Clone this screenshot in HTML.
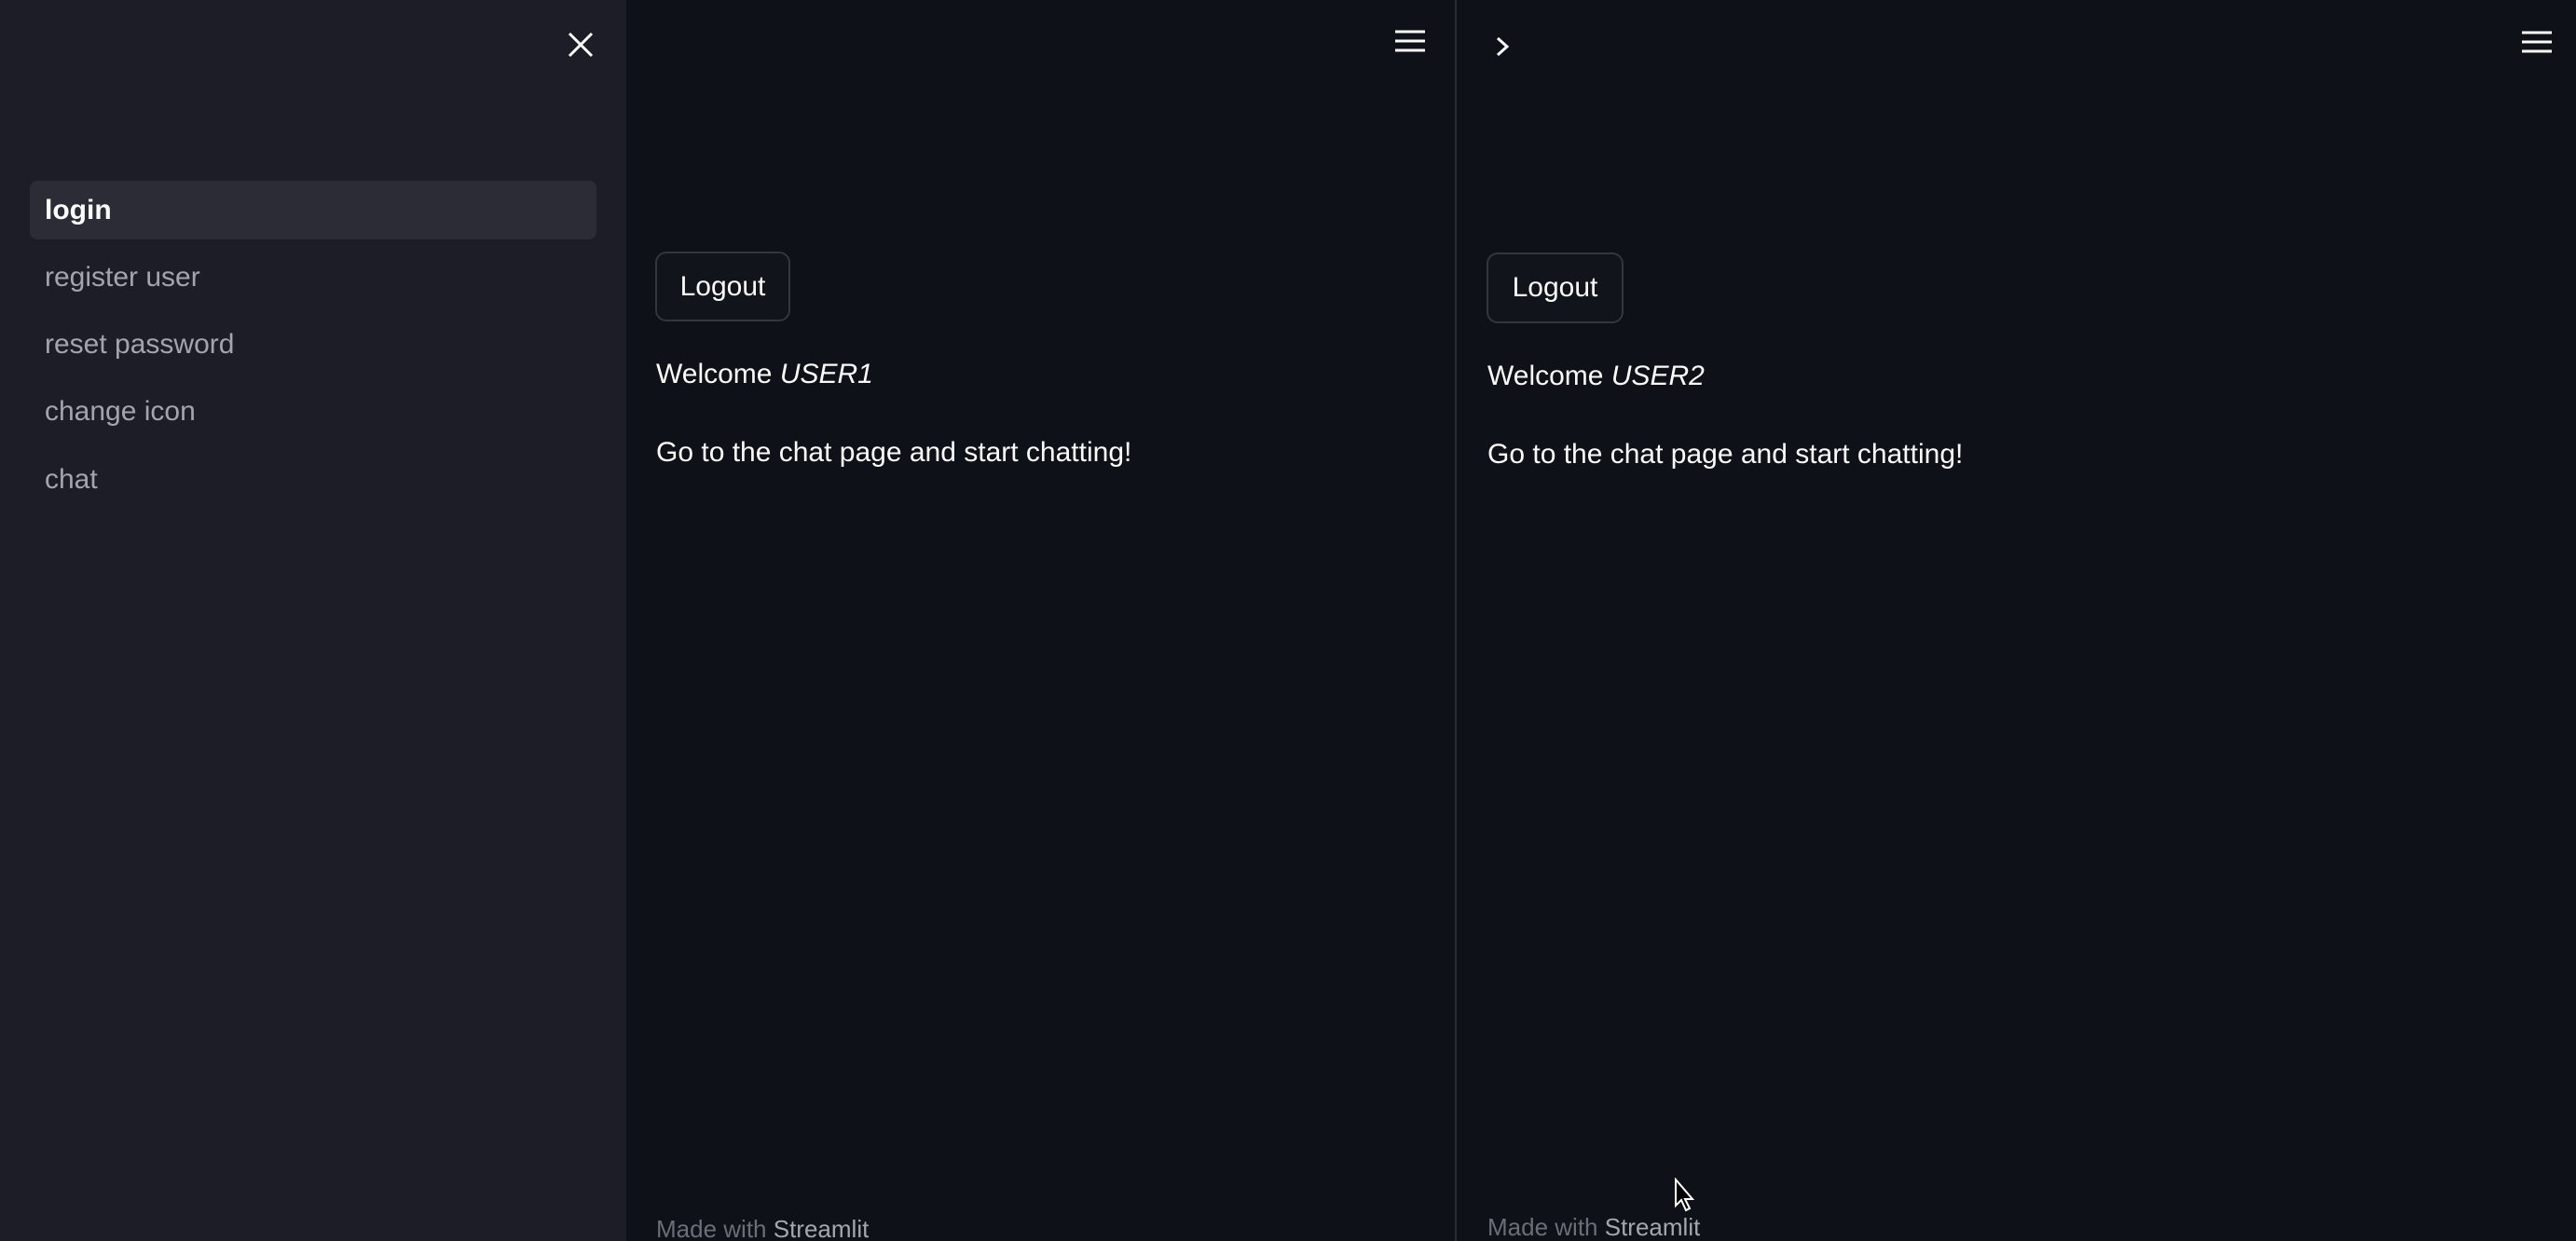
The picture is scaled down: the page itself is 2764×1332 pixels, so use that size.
<!DOCTYPE html>
<html><head><meta charset="utf-8"><style>
html,body{margin:0;padding:0;width:2764px;height:1332px;overflow:hidden;background:#0e1117;font-family:"Liberation Sans",sans-serif;color:#fafafa}
.abs{position:absolute}
#side{left:0;top:0;width:672px;height:1332px;background:#1c1d27}
.nav{position:absolute;left:48px;font-size:30px;color:#a3a5ad;line-height:36px}
.btn{position:absolute;border:2px solid #33363f;border-radius:12px;background:#11141b;font-size:30px;color:#fafafa;display:flex;align-items:center;justify-content:center}
.txt{position:absolute;font-size:30px;line-height:36px;color:#fafafa;white-space:nowrap}
.foot{position:absolute;font-size:26px;line-height:26px;height:26px;overflow:hidden;color:#6b6e78;white-space:nowrap}
.foot b{font-weight:normal;color:#a5a7ae}
</style></head><body>
<div id="side" class="abs"></div>
<svg class="abs" style="left:608px;top:33px" width="30" height="30" viewBox="0 0 30 30"><path d="M3 3L27 27M27 3L3 27" stroke="#fafafa" stroke-width="3"/></svg>
<div class="abs" style="left:32px;top:194px;width:608px;height:63px;background:#2b2c36;border-radius:8px"></div>
<div class="nav" style="top:208px;color:#fafafa;font-weight:bold">login</div>
<div class="nav" style="top:280px">register user</div>
<div class="nav" style="top:352px">reset password</div>
<div class="nav" style="top:424px">change icon</div>
<div class="nav" style="top:497px">chat</div>

<svg class="abs" style="left:1497px;top:31px" width="32" height="26"><path d="M0 3H32M0 13H32M0 23H32" stroke="#fafafa" stroke-width="3"/></svg>
<div class="btn" style="left:703px;top:270px;width:141px;height:71px">Logout</div>
<div class="txt" style="left:704px;top:384px">Welcome <i>USER1</i></div>
<div class="txt" style="left:704px;top:468px">Go to the chat page and start chatting!</div>
<div class="foot" style="left:704px;top:1306px">Made with <b>Streamlit</b></div>

<div class="abs" style="left:1561px;top:0;width:2px;height:1332px;background:#2a2c35"></div>
<svg class="abs" style="left:1603px;top:38px" width="20" height="24"><path d="M4 3L14 12L4 21" fill="none" stroke="#fafafa" stroke-width="3"/></svg>
<svg class="abs" style="left:2706px;top:32px" width="32" height="26"><path d="M0 3H32M0 13H32M0 23H32" stroke="#fafafa" stroke-width="3"/></svg>
<div class="btn" style="left:1595px;top:271px;width:143px;height:72px">Logout</div>
<div class="txt" style="left:1596px;top:386px">Welcome <i>USER2</i></div>
<div class="txt" style="left:1596px;top:470px">Go to the chat page and start chatting!</div>
<div class="foot" style="left:1596px;top:1304px">Made with <b>Streamlit</b></div>
<svg class="abs" style="left:1796px;top:1264px" width="24" height="38"><path d="M2 2L2 30L8 24L13 35L17 33L12 23L20 23Z" fill="#000" stroke="#fff" stroke-width="2"/></svg>
</body></html>
